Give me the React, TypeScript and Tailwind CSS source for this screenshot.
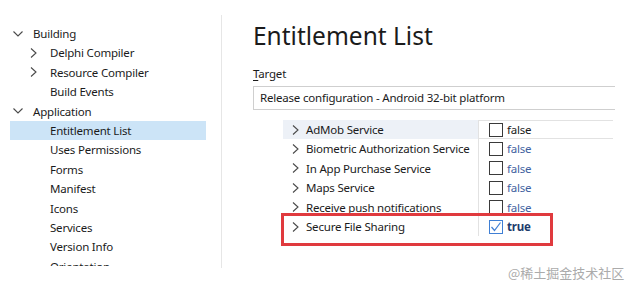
import React from "react";

const FONT = '"Noto Sans", "Open Sans", "Noto Sans CJK SC", sans-serif';

function ChevronRight() {
  return (
    <svg width="9" height="12" viewBox="0 0 9 12" className="shrink-0">
      <path d="M2 1.5 L7 6 L2 10.5" fill="none" stroke="#4a4a4a" strokeWidth="1.1" />
    </svg>
  );
}

function ChevronDown() {
  return (
    <svg width="12" height="8" viewBox="0 0 12 8" className="shrink-0">
      <path d="M1.5 1.5 L6 6 L10.5 1.5" fill="none" stroke="#4a4a4a" strokeWidth="1.1" />
    </svg>
  );
}

type TreeItem = { label: string; level: 0 | 1; icon?: "down" | "right"; selected?: boolean };

const tree: TreeItem[] = [
  { label: "Building", level: 0, icon: "down" },
  { label: "Delphi Compiler", level: 1, icon: "right" },
  { label: "Resource Compiler", level: 1, icon: "right" },
  { label: "Build Events", level: 1 },
  { label: "Application", level: 0, icon: "down" },
  { label: "Entitlement List", level: 1, selected: true },
  { label: "Uses Permissions", level: 1 },
  { label: "Forms", level: 1 },
  { label: "Manifest", level: 1 },
  { label: "Icons", level: 1 },
  { label: "Services", level: 1 },
  { label: "Version Info", level: 1 },
  { label: "Orientation", level: 1 },
];

type Row = { label: string; checked: boolean; focused?: boolean };
const rows: Row[] = [
  { label: "AdMob Service", checked: false, focused: true },
  { label: "Biometric Authorization Service", checked: false },
  { label: "In App Purchase Service", checked: false },
  { label: "Maps Service", checked: false },
  { label: "Receive push notifications", checked: false },
  { label: "Secure File Sharing", checked: true },
];

function Checkbox({ checked }: { checked: boolean }) {
  if (checked) {
    return (
      <div className="w-[14px] h-[14px] border border-[#3f7fd4] bg-white flex items-center justify-center shrink-0">
        <svg width="12" height="12" viewBox="0 0 12 12">
          <path d="M1.5 6 L4.5 9.5 L10.5 1.5" fill="none" stroke="#3f7fd4" strokeWidth="1.2" />
        </svg>
      </div>
    );
  }
  return <div className="w-[14px] h-[14px] border border-[#3a3a3a] bg-white shrink-0" />;
}

export default function App() {
  return (
    <div
      className="relative w-[631px] h-[288px] overflow-hidden bg-white text-[#1b1b1b]"
      style={{ fontFamily: FONT }}
    >
      <div className="flex h-[268px]">
        {/* Left tree */}
        <div className="w-[221px] h-[266px] overflow-hidden pt-[24px] pl-[10px] pr-[15px]">
          {tree.map((t) => (
            <div
              key={t.label}
              className={`flex items-center h-[19.4px] text-[11.5px] tracking-[-0.2px] whitespace-nowrap ${
                t.selected ? "bg-[#cce4f7]" : ""
              } ${t.level === 0 ? "pl-[2px]" : "pl-[19px]"}`}
            >
              <div className="w-[21px] shrink-0 flex items-center">
                {t.icon === "down" ? <ChevronDown /> : t.icon === "right" ? <ChevronRight /> : null}
              </div>
              <span>{t.label}</span>
            </div>
          ))}
        </div>

        {/* Divider */}
        <div className="w-px mt-[15px] h-[253px] bg-[#e6e6e6] shrink-0" />

        {/* Right content */}
        <div className="flex-1 pl-[31px] pt-[20px]">
          <div className="text-[24.5px] leading-[32px] whitespace-nowrap">Entitlement List</div>
          <div className="mt-[13px] h-[18px] flex items-center text-[11.5px] tracking-[-0.2px]">
            <span>
              <span className="underline underline-offset-2">T</span>arget
            </span>
          </div>
          <div className="mt-[3px] h-[24px] w-[362px] border border-r-0 border-[#cfcfcf] flex items-center pl-[6px] text-[11.5px] tracking-[-0.2px] whitespace-nowrap">
            Release configuration - Android 32-bit platform
          </div>

          <div className="mt-[10px] ml-[30px] w-[330px]">
            {rows.map((r) => (
              <div
                key={r.label}
                className="flex h-[19.4px] text-[11.5px] tracking-[-0.2px] whitespace-nowrap"
              >
                <div
                  className={`w-[195px] shrink-0 flex items-center pl-[8px] ${
                    r.focused ? "bg-[#edf1f7]" : ""
                  }`}
                >
                  <div className="w-[15px] shrink-0 flex items-center">
                    <ChevronRight />
                  </div>
                  <span>{r.label}</span>
                </div>
                <div
                  className={`flex-1 flex items-center pl-[10px] border-l border-[#e2e2e2] ${
                    r.focused ? "border-t border-b" : ""
                  }`}
                >
                  <Checkbox checked={r.checked} />
                  <span
                    className={`ml-[4px] ${
                      r.checked
                        ? "font-bold text-[#1d3b6c]"
                        : r.focused
                        ? "text-[#1b1b1b]"
                        : "text-[#4262a0]"
                    }`}
                  >
                    {r.checked ? "true" : "false"}
                  </span>
                </div>
              </div>
            ))}
          </div>
        </div>
      </div>

      {/* Red highlight annotation */}
      <div className="absolute left-[281px] top-[213px] w-[272px] h-[33px] border-[3px] border-[#e03a3e]" />

      {/* Watermark */}
      <div
        className="absolute left-[508px] top-[264px] text-[13px] leading-[18px] text-[#ababab] whitespace-nowrap"
        style={{ fontFamily: '"Noto Sans CJK SC", sans-serif' }}
      >
        @稀土掘金技术社区
      </div>
    </div>
  );
}
